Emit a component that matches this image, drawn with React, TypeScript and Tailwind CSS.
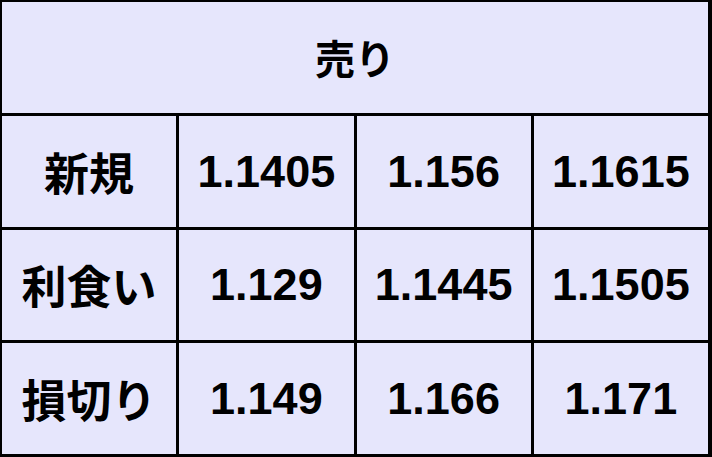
import React from "react";

const rows: { label: string; values: string[] }[] = [
  { label: "新規", values: ["1.1405", "1.156", "1.1615"] },
  { label: "利食い", values: ["1.129", "1.1445", "1.1505"] },
  { label: "損切り", values: ["1.149", "1.166", "1.171"] },
];

const jp = "font-['Noto_Sans_CJK_JP',sans-serif]";
const num = "font-['Liberation_Sans',Arial,sans-serif]";

export default function App() {
  return (
    <div className="w-[712px] h-[457px] bg-black pl-[2px] pt-[2px] pr-[4px] pb-[3px] grid grid-cols-4 grid-rows-4 gap-[3px]">
      <div className={`col-span-4 bg-[#e6e6fc] flex items-center justify-center text-[40px] font-bold text-black ${jp}`}>
        売り
      </div>
      {rows.map((r) => (
        <React.Fragment key={r.label}>
          <div className={`bg-[#e6e6fc] flex items-center justify-center text-[45px] leading-none font-bold text-black ${jp}`}>
            {r.label}
          </div>
          {r.values.map((v, i) => (
            <div
              key={i}
              className={`bg-[#e6e6fc] flex items-center justify-center text-[45px] leading-none font-bold text-black ${num}`}
            >
              {v}
            </div>
          ))}
        </React.Fragment>
      ))}
    </div>
  );
}
